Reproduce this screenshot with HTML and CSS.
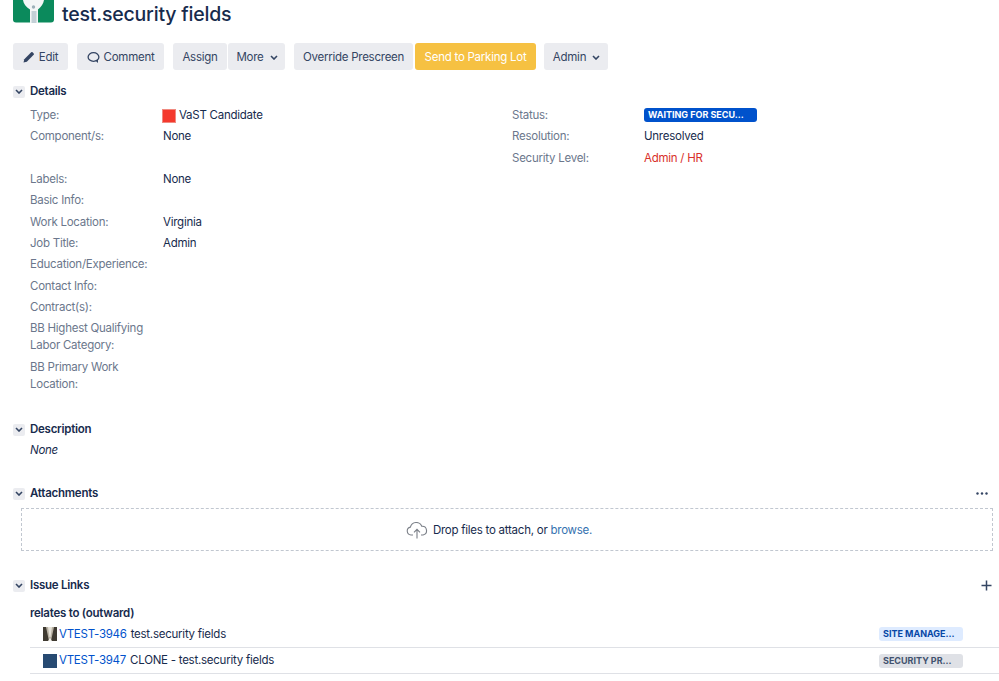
FILE: index.html
```html
<!DOCTYPE html>
<html lang="en">
<head>
<meta charset="utf-8">
<title>test.security fields</title>
<link rel="stylesheet" href="styles.css">
</head>
<body>
<header class="head">
  <svg class="logo" width="41" height="23" viewBox="0 0 41 23">
    <rect y="-6" width="41" height="28.500" rx="3" fill="#0b8a5c"/>
    <path d="M10 0h21c-.5 4-3 7-6 9.500V23h-8V9.500C13 7 10.500 4 10 0z" fill="#f4f6f6"/>
    <path d="M18.500 11h5v12h-5z" fill="#c3d0d6"/>
    <circle cx="20.500" cy="7" r="1.700" fill="#9db0b8"/>
  </svg>
  <h1 class="title">test.security fields</h1>
</header>
<nav class="toolbar">
  <a class="btn w-edit"><svg class="ico" width="12" height="12" viewBox="0 0 12 12"><path d="M0.500 11.500l.8-3.300L8.200 1.300a1 1 0 0 1 1.400 0l1.100 1.100a1 1 0 0 1 0 1.400L3.800 10.700z" fill="#344563"/></svg>Edit</a>
  <a class="btn w-comment gap"><svg class="ico" width="13" height="13" viewBox="0 0 13 13"><ellipse cx="6.500" cy="6" rx="5.400" ry="4.400" fill="none" stroke="#344563" stroke-width="1.300"/><path d="M8.500 9.800l2.500 2.200V8.500z" fill="#344563"/></svg>Comment</a>
  <a class="btn w-assign gap">Assign</a>
  <a class="btn w-more joined"><span class="nudge">More</span><svg class="caret" width="8" height="5" viewBox="0 0 8 5"><path d="M1 1l3 3 3-3" fill="none" stroke="#344563" stroke-width="1.600"/></svg></a>
  <a class="btn w-override gap">Override Prescreen</a>
  <a class="btn btn-yellow w-send joined2">Send to Parking Lot</a>
  <a class="btn w-admin gap2"><span class="nudge">Admin</span><svg class="caret" width="8" height="5" viewBox="0 0 8 5"><path d="M1 1l3 3 3-3" fill="none" stroke="#344563" stroke-width="1.600"/></svg></a>
</nav>

<section class="sec sec-details">
  <h2 class="sec-head"><span class="tw"><svg width="8" height="5" viewBox="0 0 8 5"><path d="M1 1l3 3 3-3" fill="none" stroke="#344563" stroke-width="1.600"/></svg></span>Details</h2>
  <div class="details">
    <dl class="col col-left">
      <div class="row"><dt>Type:</dt><dd class="with-sq"><span class="sq"></span>VaST Candidate</dd></div>
      <div class="row row-tall"><dt>Component/s:</dt><dd>None</dd></div>
      <div class="row"><dt>Labels:</dt><dd>None</dd></div>
      <div class="row"><dt>Basic Info:</dt><dd></dd></div>
      <div class="row"><dt>Work Location:</dt><dd>Virginia</dd></div>
      <div class="row"><dt>Job Title:</dt><dd>Admin</dd></div>
      <div class="row"><dt>Education/Experience:</dt><dd></dd></div>
      <div class="row"><dt>Contact Info:</dt><dd></dd></div>
      <div class="row"><dt>Contract(s):</dt><dd></dd></div>
      <div class="row row-wrap"><dt>BB Highest Qualifying Labor Category:</dt><dd></dd></div>
      <div class="row row-wrap"><dt>BB Primary Work Location:</dt><dd></dd></div>
    </dl>
    <dl class="col col-right">
      <div class="row"><dt>Status:</dt><dd><span class="status">WAITING FOR SECU...</span></dd></div>
      <div class="row"><dt>Resolution:</dt><dd>Unresolved</dd></div>
      <div class="row"><dt>Security Level:</dt><dd class="red">Admin / HR</dd></div>
    </dl>
  </div>
</section>

<section class="sec sec-desc">
  <h2 class="sec-head"><span class="tw"><svg width="8" height="5" viewBox="0 0 8 5"><path d="M1 1l3 3 3-3" fill="none" stroke="#344563" stroke-width="1.600"/></svg></span>Description</h2>
  <p class="none">None</p>
</section>

<section class="sec sec-attach">
  <h2 class="sec-head"><span class="tw"><svg width="8" height="5" viewBox="0 0 8 5"><path d="M1 1l3 3 3-3" fill="none" stroke="#344563" stroke-width="1.600"/></svg></span>Attachments<svg class="more-dots" width="12" height="3" viewBox="0 0 12 3"><circle cx="1.500" cy="1.500" r="1.200" fill="#344563"/><circle cx="6" cy="1.500" r="1.200" fill="#344563"/><circle cx="10.500" cy="1.500" r="1.200" fill="#344563"/></svg></h2>
  <div class="drop">
    <svg class="cloud" width="22" height="17" viewBox="0 0 22 17"><path d="M7 13H5a4 4 0 0 1-.6-7.900A6 6 0 0 1 15.800 4.300 4.400 4.400 0 0 1 17 13h-2" fill="none" stroke="#7a7f87" stroke-width="1.100"/><path d="M11 16.500V7.500M8 10.300l3-3 3 3" fill="none" stroke="#7a7f87" stroke-width="1.100"/></svg>
    <span>Drop files to attach, or <a class="browse">browse.</a></span>
  </div>
</section>

<section class="sec sec-links">
  <h2 class="sec-head"><span class="tw"><svg width="8" height="5" viewBox="0 0 8 5"><path d="M1 1l3 3 3-3" fill="none" stroke="#344563" stroke-width="1.600"/></svg></span>Issue Links<svg class="plus" width="11" height="11" viewBox="0 0 11 11"><path d="M5.500 0.500v10M0.500 5.500h10" stroke="#344563" stroke-width="1.500" fill="none"/></svg></h2>
  <h3 class="rel">relates to (outward)</h3>
  <ul class="links">
    <li class="link">
      <svg class="av" width="14" height="14" viewBox="0 0 14 14"><rect width="14" height="14" fill="#b9b2a4"/><path d="M0 0h3l3 14H0zM14 0h-3L8 14h6z" fill="#3f3a31"/><path d="M5 0h4L7.500 10h-1z" fill="#e6e2d8"/><path d="M5 14l2-3 2 3z" fill="#f2efe8"/></svg>
      <a class="key">VTEST-3946</a><span>test.security fields</span>
      <span class="lozenge lz-blue">SITE MANAGE...</span>
    </li>
    <li class="link">
      <svg class="av" width="14" height="14" viewBox="0 0 14 14"><rect width="14" height="14" fill="#274a72"/></svg>
      <a class="key">VTEST-3947</a><span>CLONE - test.security fields</span>
      <span class="lozenge lz-grey">SECURITY PR...</span>
    </li>
  </ul>
</section>
</body>
</html>
```
FILE: styles.css
```css
* { box-sizing: border-box; }
html, body { margin: 0; padding: 0; }
body {
  width: 999px;
  height: 681px;
  overflow: hidden;
  background: #fff;
  color: #172b4d;
  font-family: Inter, "Liberation Sans", sans-serif;
  font-size: 11.500px;
  letter-spacing: -0.250px;
  line-height: 17px;
}
.head {
  display: flex;
  align-items: flex-start;
  height: 43px;
  padding-left: 13px;
}
.logo { flex: none; }
.title {
  margin: 0 0 0 8px;
  font-size: 19.500px;
  letter-spacing: -0.200px;
  line-height: 28px;
  font-weight: 500;
  color: #172b4d;
}
.toolbar {
  display: flex;
  height: 27px;
  padding-left: 13px;
}
.btn {
  display: flex;
  align-items: center;
  justify-content: center;
  height: 27px;
  padding-top: 1px;
  background: #ebecf0;
  border-radius: 3px;
  color: #344563;
}
.gap { margin-left: 9px; }
.gap2 { margin-left: 8px; }
.joined { margin-left: 1px; }
.joined2 { margin-left: 2px; }
.w-edit { width: 55px; }
.w-comment { width: 87px; }
.w-assign { width: 54px; }
.w-more { width: 57px; }
.w-override { width: 119px; }
.w-send { width: 121px; }
.w-admin { width: 64px; }
.btn-yellow { background: #f6c142; color: #fff; }
.ico { margin-right: 4px; }
.nudge { margin-left: 1px; }
.caret { margin-left: 6px; }
.sec { padding-left: 13px; }
.sec-head {
  display: flex;
  align-items: center;
  margin: 0;
  height: 17px;
  font-size: 11.500px;
  font-weight: 600;
  color: #172b4d;
}
.tw {
  display: flex;
  align-items: center;
  justify-content: center;
  width: 12px;
  height: 12px;
  margin-right: 5px;
  background: #ebecf0;
  border-radius: 2px;
}
.sec-details { margin-top: 13px; }
.details { display: flex; padding-left: 17px; margin-top: 7px; }
.col { margin: 0; }
.col-left { width: 482px; }
.row {
  display: flex;
  min-height: 21.350px;
  padding-bottom: 4px;
}
.row-tall { min-height: 42.700px; }
.row-wrap { min-height: 38.500px; }
.row dt { width: 133px; padding-right: 10px; color: #6b778c; }
.col-right .row dt { width: 132px; }
.row dd { margin: 0; }
.with-sq { display: flex; align-items: center; }
.sq {
  width: 14px;
  height: 14px;
  margin: 0 3px 0 -1px;
  background: #f4392d;
  border: 1px solid #f08a80;
}
.red { color: #d9302a; }
.status {
  display: block;
  width: 113px;
  height: 14px;
  margin-top: 1px;
  padding-left: 4px;
  background: #0052cc;
  border-radius: 3px;
  color: #fff;
  font-size: 9px;
  font-weight: 700;
  letter-spacing: 0;
  line-height: 14px;
  white-space: nowrap;
}
.sec-desc { margin-top: 24px; }
.none { margin: 4px 0 0 17px; font-style: italic; }
.sec-attach { margin-top: 26px; }
.more-dots { margin-left: auto; margin-right: 11px; }
.drop {
  display: flex;
  align-items: center;
  justify-content: center;
  width: 972px;
  height: 43px;
  margin: 6px 0 0 8px;
  padding: 1px 16px 0 0;
  border: 1px dashed #c1c7d0;
}
.cloud { margin-right: 5px; }
.browse { color: #3572b0; }
.sec-links { margin-top: 26px; }
.plus { margin-left: auto; margin-right: 7px; }
.rel {
  margin: 11px 0 0 17px;
  font-size: 11.500px;
  font-weight: 600;
  line-height: 17px;
}
.links {
  list-style: none;
  margin: -1px 0 0 17px;
  padding: 0;
}
.link {
  display: flex;
  align-items: center;
  height: 26.500px;
  padding-left: 13px;
  padding-right: 36px;
  border-bottom: 1px solid #dfe1e6;
  white-space: pre;
}
.av { margin-right: 2px; }
.key { color: #0052cc; margin-right: 4px; }
.lozenge {
  margin-left: auto;
  width: 84px;
  height: 14px;
  padding-left: 4px;
  border-radius: 3px;
  font-size: 9px;
  font-weight: 700;
  letter-spacing: 0;
  line-height: 14px;
}
.lz-blue { background: #deebff; color: #0747a6; }
.lz-grey { background: #dfe1e6; color: #42526e; }
```
